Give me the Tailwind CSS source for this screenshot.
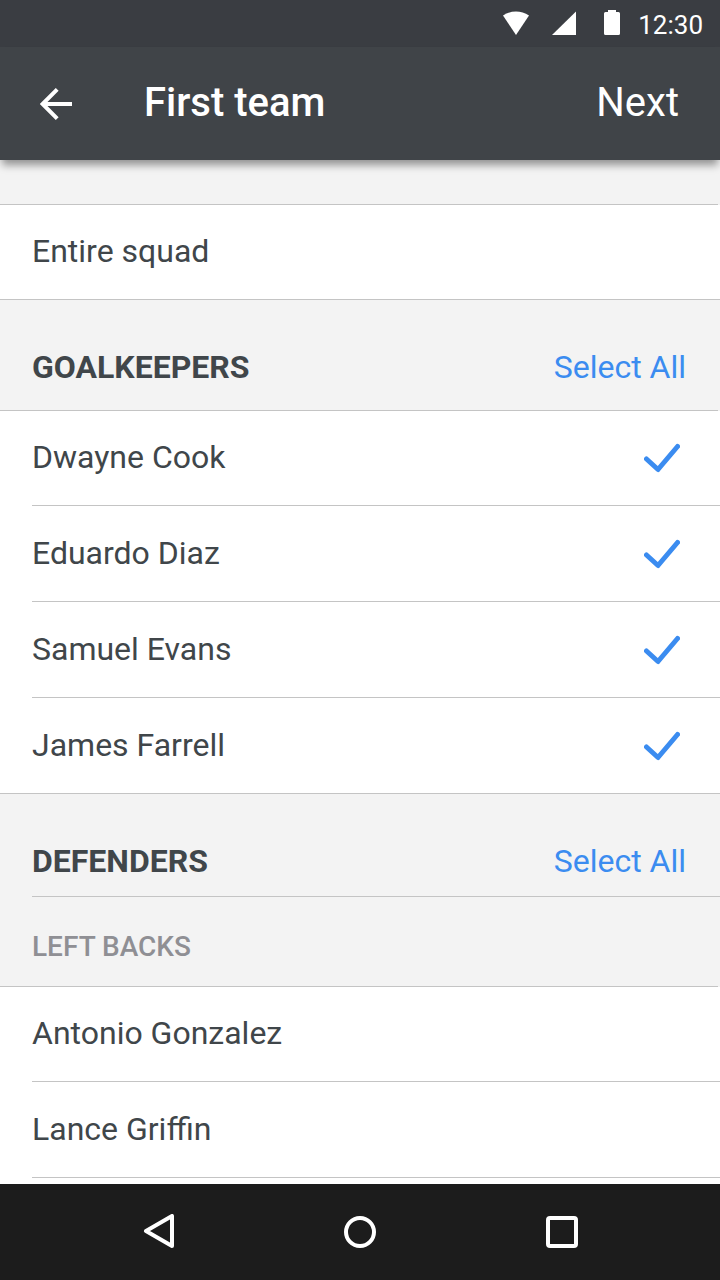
<!DOCTYPE html>
<html lang="en">

<head>
  <meta charset="UTF-8" />
  <meta name="viewport" content="width=device-width, initial-scale=1.0" />
  <title>First team</title>
  <script src="https://cdn.jsdelivr.net/npm/@tailwindcss/browser@4"></script>
</head>

<body class="h-screen flex flex-col bg-white text-[#40464a] font-[Roboto,sans-serif]">
  <!-- Status bar -->
  <div class="flex items-center justify-end h-[47px] pt-[3px] pr-[17px] shrink-0 bg-[#3a3d42] text-white">
    <svg class="w-[26px] h-[26px] mr-[23px] mb-1" viewBox="0 0 26 26" fill="currentColor" aria-hidden="true">
      <path d="M13 25 0 5.500C8 .2 18 .2 26 5.500z" />
    </svg>
    <svg class="w-6 h-[26px] mr-7 mb-1" viewBox="0 0 24 26" fill="currentColor" aria-hidden="true">
      <path d="M0 25h24V1.500z" />
    </svg>
    <svg class="w-4 h-[26px] mr-[18px] mb-1" viewBox="0 0 16 26" fill="currentColor" aria-hidden="true">
      <path d="M4 2V0h8v2h2.500Q16 2 16 3.500v20q0 1.500-1.500 1.500h-13Q0 25 0 23.500v-20Q0 2 1.500 2z" />
    </svg>
    <span class="text-[26px] leading-8">12:30</span>
  </div>

  <!-- App bar -->
  <header
    class="relative z-10 flex items-center h-[113px] pl-10 pr-[41px] pb-px shrink-0 bg-[#404448] text-white text-[40px] leading-12 shadow-[0_7px_8px_-2px_rgba(0,0,0,0.4)]">
    <button type="button" aria-label="Back" class="mr-[72px]">
      <svg class="w-8 h-8 mt-px" viewBox="0 0 32 32" fill="none" stroke="currentColor" stroke-width="4" aria-hidden="true">
        <path d="M17.200 1.400 2.600 16l14.600 14.600M3 16h29" />
      </svg>
    </button>
    <h1 class="font-medium">First team</h1>
    <button type="button" class="ml-auto">Next</button>
  </header>

  <main class="flex-1 min-h-0 overflow-hidden">
    <div class="bg-[#f3f3f3]">
      <div class="h-[45px] mr-0.5 border-b border-[#c4c4c4]"></div>
    </div>
    <label class="flex items-center justify-between h-[95px] pl-8 pr-10 pb-0.5 border-b border-[#c4c4c4] text-[32px] leading-10">
      Entire squad
      <input type="checkbox" class="appearance-none size-9" />
    </label>

    <section>
      <div class="bg-[#f3f3f3]">
        <div class="flex items-end justify-between h-[111px] mr-0.5 pl-8 pr-8 pb-[23px] border-b border-[#c4c4c4] text-[32px] leading-10">
          <h2 class="font-bold">GOALKEEPERS</h2>
          <button type="button" class="text-[#3b8cf0]">Select All</button>
        </div>
      </div>
      <ul class="text-[32px] leading-10">
        <li class="h-[95px] pl-8">
          <label class="flex items-center justify-between h-full pr-10 pb-0.5 border-b border-[#c4c4c4]">
            Dwayne Cook
            <span class="grid">
              <input type="checkbox" class="peer appearance-none col-start-1 row-start-1 size-9" checked />
              <svg class="hidden peer-checked:block col-start-1 row-start-1 size-9 text-[#3b8cf0]" viewBox="0 0 36 36" fill="none" stroke="currentColor" stroke-width="5" stroke-linecap="round" stroke-linejoin="round" aria-hidden="true">
                <path d="M2.500 20 14 30.500 33.500 7.500" />
              </svg>
            </span>
          </label>
        </li>
        <li class="h-24 pl-8">
          <label class="flex items-center justify-between h-full pr-10 pb-0.5 border-b border-[#c4c4c4]">
            Eduardo Diaz
            <span class="grid">
              <input type="checkbox" class="peer appearance-none col-start-1 row-start-1 size-9" checked />
              <svg class="hidden peer-checked:block col-start-1 row-start-1 size-9 text-[#3b8cf0]" viewBox="0 0 36 36" fill="none" stroke="currentColor" stroke-width="5" stroke-linecap="round" stroke-linejoin="round" aria-hidden="true">
                <path d="M2.500 20 14 30.500 33.500 7.500" />
              </svg>
            </span>
          </label>
        </li>
        <li class="h-24 pl-8">
          <label class="flex items-center justify-between h-full pr-10 pb-0.5 border-b border-[#c4c4c4]">
            Samuel Evans
            <span class="grid">
              <input type="checkbox" class="peer appearance-none col-start-1 row-start-1 size-9" checked />
              <svg class="hidden peer-checked:block col-start-1 row-start-1 size-9 text-[#3b8cf0]" viewBox="0 0 36 36" fill="none" stroke="currentColor" stroke-width="5" stroke-linecap="round" stroke-linejoin="round" aria-hidden="true">
                <path d="M2.500 20 14 30.500 33.500 7.500" />
              </svg>
            </span>
          </label>
        </li>
        <li class="h-24 pl-8 border-b border-[#c4c4c4]">
          <label class="flex items-center justify-between h-full pr-10 pb-0.5">
            James Farrell
            <span class="grid">
              <input type="checkbox" class="peer appearance-none col-start-1 row-start-1 size-9" checked />
              <svg class="hidden peer-checked:block col-start-1 row-start-1 size-9 text-[#3b8cf0]" viewBox="0 0 36 36" fill="none" stroke="currentColor" stroke-width="5" stroke-linecap="round" stroke-linejoin="round" aria-hidden="true">
                <path d="M2.500 20 14 30.500 33.500 7.500" />
              </svg>
            </span>
          </label>
        </li>
      </ul>
    </section>

    <section>
      <div class="bg-[#f3f3f3]">
        <div class="flex items-end justify-between h-[103px] ml-8 pr-[34px] pb-[15px] border-b border-[#c4c4c4] text-[32px] leading-10">
          <h2 class="font-bold">DEFENDERS</h2>
          <button type="button" class="text-[#3b8cf0]">Select All</button>
        </div>
        <div class="flex items-end h-[90px] mr-0.5 pl-8 pb-[19px] border-b border-[#c4c4c4]">
          <h3 class="text-[28px] leading-10 font-medium text-[#8f8f94]">LEFT BACKS</h3>
        </div>
      </div>
      <ul class="text-[32px] leading-10">
        <li class="h-[95px] pl-8">
          <label class="flex items-center justify-between h-full pr-10 pb-0.5 border-b border-[#c4c4c4]">
            Antonio Gonzalez
            <input type="checkbox" class="appearance-none size-9" />
          </label>
        </li>
        <li class="h-24 pl-8">
          <label class="flex items-center justify-between h-full pr-10 pb-0.5 border-b border-[#c4c4c4]">
            Lance Griffin
            <input type="checkbox" class="appearance-none size-9" />
          </label>
        </li>
      </ul>
    </section>
  </main>

  <!-- System navigation -->
  <nav class="flex h-24 px-[57px] shrink-0 bg-[#1c1c1c] text-white">
    <button type="button" aria-label="Back" class="flex-1 grid place-items-center">
      <svg class="size-9" viewBox="0 0 36 36" fill="none" stroke="currentColor" stroke-width="4" stroke-linejoin="round" aria-hidden="true">
        <path d="M6 17 32 2v30z" />
      </svg>
    </button>
    <button type="button" aria-label="Home" class="flex-1 grid place-items-center">
      <svg class="size-9" viewBox="0 0 36 36" fill="none" stroke="currentColor" stroke-width="4" aria-hidden="true">
        <circle cx="18" cy="18" r="14" />
      </svg>
    </button>
    <button type="button" aria-label="Recent apps" class="flex-1 grid place-items-center">
      <svg class="size-9" viewBox="0 0 36 36" fill="none" stroke="currentColor" stroke-width="4" aria-hidden="true">
        <rect x="4" y="4" width="28" height="28" rx="2" />
      </svg>
    </button>
  </nav>
</body>

</html>
